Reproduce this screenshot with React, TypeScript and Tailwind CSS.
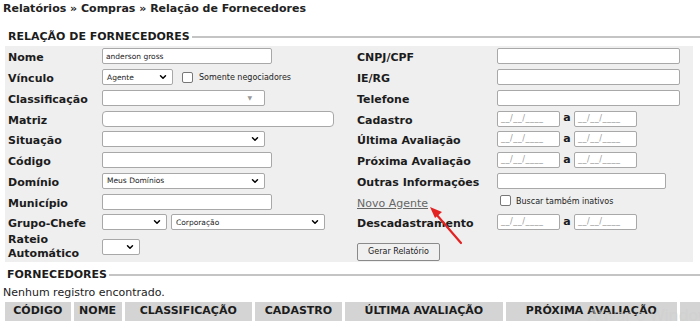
import React from "react";
import { ChevronDown } from "lucide-react";

const Label = ({ children }: { children: React.ReactNode }) => (
  <span className="text-[11px] font-bold text-[#1c1c1c] leading-[14px]">{children}</span>
);

const Input = ({ w, value, rounded }: { w: string; value?: string; rounded?: boolean }) => (
  <div
    className={`${w} h-[16px] bg-white border border-[#a8a8a8] ${
      rounded ? "rounded-[4px]" : "rounded-[2px]"
    } flex items-center px-[3px] text-[7.5px] text-[#222]`}
  >
    {value}
  </div>
);

const Select = ({ w, value, small }: { w: string; value?: string; small?: boolean }) => (
  <div
    className={`${w} h-[16px] bg-white border border-[#a8a8a8] rounded-[2px] flex items-center justify-between pl-[4px] pr-[4px] text-[7.5px] text-[#222]`}
  >
    <span>{value}</span>
    {small ? (
      <span className="text-[6px] text-[#999] mr-[8px]">▼</span>
    ) : (
      <ChevronDown size={10} strokeWidth={3.5} className="text-black" />
    )}
  </div>
);

const DateRange = () => (
  <div className="flex items-center">
    <div className="w-[63px] h-[16px] bg-white border border-[#a8a8a8] rounded-[2px] flex items-center px-[3px] text-[8px] text-[#999] tracking-[0.5px]">
      __/__/____
    </div>
    <span className="w-[14px] text-center text-[11px] font-bold text-[#1c1c1c]">a</span>
    <div className="w-[63px] h-[16px] bg-white border border-[#a8a8a8] rounded-[2px] flex items-center px-[3px] text-[8px] text-[#999] tracking-[0.5px]">
      __/__/____
    </div>
  </div>
);

const Check = () => (
  <div className="w-[11px] h-[11px] bg-white border border-[#777] rounded-[2px]" />
);

const Row = ({ label, children, lw }: { label?: React.ReactNode; children?: React.ReactNode; lw: string }) => (
  <div className="h-[20.75px] flex items-center">
    <div className={`${lw} shrink-0`}>{label}</div>
    {children}
  </div>
);

const Legend = ({ text }: { text: string }) => (
  <div className="flex items-center h-[16px]">
    <span className="text-[11px] font-bold text-[#1c1c1c] pl-[3px] pr-[2px]">{text}</span>
    <div className="flex-1 h-[2px] bg-[#c4c4c4]" />
  </div>
);

export default function App() {
  const L = "w-[94px]";
  const R = "w-[140px]";
  return (
    <div className="relative w-[700px] h-[323px] overflow-hidden bg-white font-['DejaVu_Sans',Verdana,sans-serif] text-[#1c1c1c]">
      <div className="h-[18px] pl-[3px] flex items-center text-[11px] font-bold text-[#222]">
        Relatórios » Compras » Relação de Fornecedores
      </div>

      <div className="mt-[11px] pl-[5px]">
        <Legend text="RELAÇÃO DE FORNECEDORES" />
      </div>

      <div className="mt-[1px] ml-[5px] w-[688px] h-[216px] bg-[#efefef] flex">
        <div className="w-[352px] pl-[3px] flex flex-col">
          <Row lw={L} label={<Label>Nome</Label>}>
            <Input w="w-[170px]" value="anderson gross" />
          </Row>
          <Row lw={L} label={<Label>Vínculo</Label>}>
            <Select w="w-[71px]" value="Agente" />
            <div className="ml-[9px]">
              <Check />
            </div>
            <span className="ml-[6px] mt-[2px] text-[8px] text-[#222]">Somente negociadores</span>
          </Row>
          <Row lw={L} label={<Label>Classificação</Label>}>
            <Select w="w-[163px]" small />
          </Row>
          <Row lw={L} label={<Label>Matriz</Label>}>
            <Input w="w-[232px]" rounded />
          </Row>
          <Row lw={L} label={<Label>Situação</Label>}>
            <Select w="w-[163px]" />
          </Row>
          <Row lw={L} label={<Label>Código</Label>}>
            <Input w="w-[170px]" />
          </Row>
          <Row lw={L} label={<Label>Domínio</Label>}>
            <Select w="w-[163px]" value="Meus Domínios" />
          </Row>
          <Row lw={L} label={<Label>Município</Label>}>
            <Input w="w-[170px]" />
          </Row>
          <Row lw={L} label={<Label>Grupo-Chefe</Label>}>
            <Select w="w-[65px]" />
            <div className="ml-[4px]">
              <Select w="w-[154px]" value="Corporação" />
            </div>
          </Row>
          <div className="h-[29px] flex items-center">
            <div className={`${L} shrink-0 flex flex-col`}>
              <Label>Rateio</Label>
              <Label>Automático</Label>
            </div>
            <Select w="w-[38px]" />
          </div>
        </div>

        <div className="flex flex-col">
          <Row lw={R} label={<Label>CNPJ/CPF</Label>}>
            <Input w="w-[183px]" />
          </Row>
          <Row lw={R} label={<Label>IE/RG</Label>}>
            <Input w="w-[183px]" />
          </Row>
          <Row lw={R} label={<Label>Telefone</Label>}>
            <Input w="w-[183px]" />
          </Row>
          <Row lw={R} label={<Label>Cadastro</Label>}>
            <DateRange />
          </Row>
          <Row lw={R} label={<Label>Última Avaliação</Label>}>
            <DateRange />
          </Row>
          <Row lw={R} label={<Label>Próxima Avaliação</Label>}>
            <DateRange />
          </Row>
          <Row lw={R} label={<Label>Outras Informações</Label>}>
            <Input w="w-[169px]" />
          </Row>
          <Row
            lw={R}
            label={<span className="text-[11px] text-[#666] underline">Novo Agente</span>}
          >
            <div className="ml-[3px] -mt-[2px] flex items-center">
              <Check />
              <span className="ml-[5px] mt-[2px] text-[8px] text-[#222]">Buscar também inativos</span>
            </div>
          </Row>
          <Row lw={R} label={<Label>Descadastramento</Label>}>
            <DateRange />
          </Row>
          <div className="pt-[4px]">
            <button className="h-[18px] w-[83px] border border-[#8a8a8a] rounded-[2px] bg-[#f0f0f0] text-[8px] text-[#222]">
              Gerar Relatório
            </button>
          </div>
        </div>
      </div>

      <div className="mt-[5px] pl-[4px]">
        <Legend text="FORNECEDORES" />
      </div>
      <div className="pl-[3px] h-[16px] mt-[2px] flex items-center text-[11px] text-[#222]">
        Nenhum registro encontrado.
      </div>
      <div className="mt-[1px] pl-[5px] flex gap-[3px] text-[11px] font-bold text-[#1c1c1c]">
        <div className="w-[67px] h-[19px] bg-[#d4d4d4] flex items-center justify-center">CÓDIGO</div>
        <div className="w-[49px] h-[19px] bg-[#d4d4d4] flex items-center justify-center">NOME</div>
        <div className="w-[130px] h-[19px] bg-[#d4d4d4] flex items-center justify-center">CLASSIFICAÇÃO</div>
        <div className="w-[89px] h-[19px] bg-[#d4d4d4] flex items-center justify-center">CADASTRO</div>
        <div className="w-[161px] h-[19px] bg-[#d4d4d4] flex items-center justify-center">ÚLTIMA AVALIAÇÃO</div>
        <div className="w-[175px] h-[19px] bg-[#d4d4d4] flex items-center justify-center">PRÓXIMA AVALIAÇÃO</div>
        <div className="w-[20px] h-[19px] bg-[#d4d4d4] shrink-0" />
      </div>

      <div className="absolute left-[588px] top-[303px] text-[16px] text-[#d0d0d0] opacity-60 whitespace-nowrap font-['Noto_Sans',sans-serif]">
        Ativar o Windows
      </div>

      <svg className="absolute left-0 top-0 pointer-events-none" width="700" height="323">
        <line x1="461" y1="243" x2="436" y2="214" stroke="#e32222" strokeWidth="2.2" strokeLinecap="round" />
        <polygon points="430,207 442,212 435,218" fill="#e32222" />
      </svg>
    </div>
  );
}
